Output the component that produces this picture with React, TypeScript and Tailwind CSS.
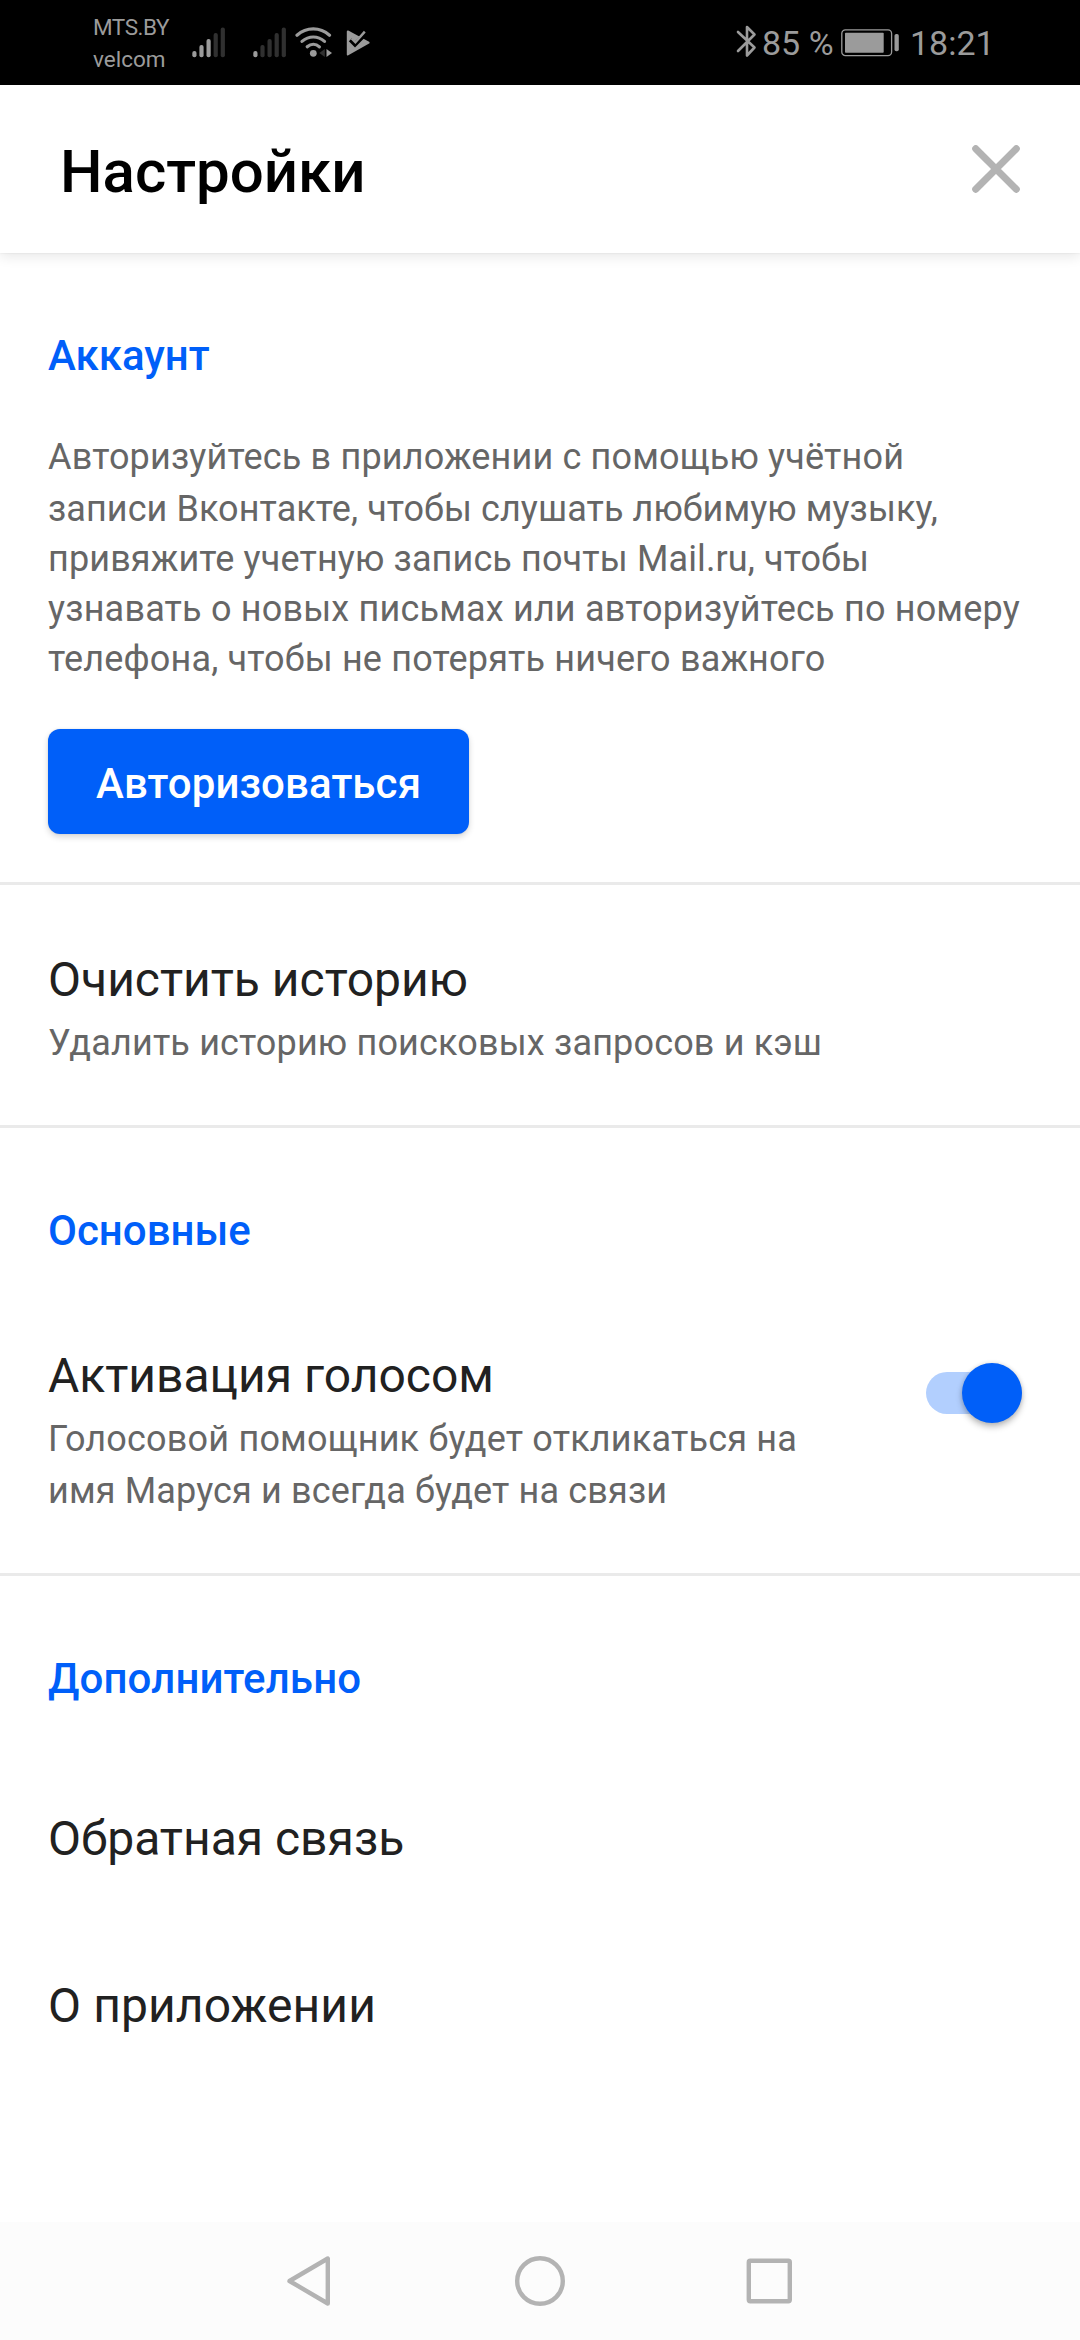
import type { ReactNode } from "react";

function SignalBars({ level, className }: { level: number; className: string }) {
  const tops = [23.5, 17.5, 11.5, 5.5, 0];
  return (
    <svg className={className} width="34" height="31" viewBox="0 0 34 31" fill="none">
      {tops.map((top, i) => (
        <rect
          key={top}
          x={0.3 + i * 7.1}
          y={top + 0.5}
          width="4.2"
          height={30 - top - 0.3}
          rx="2"
          fill={i < level ? "#9b9b9b" : "#303030"}
        />
      ))}
    </svg>
  );
}

function WifiIcon() {
  return (
    <svg className="ml-2" width="38" height="31" viewBox="0 0 38 31" fill="none">
      <g stroke="#9b9b9b" strokeWidth="3.2" strokeLinecap="round">
        <path d="M2 8.2C11.5-0.2 25-0.2 34.5 8.2" />
        <path d="M7 14.4C13.8 8.5 22.8 8.5 29.5 14.4" />
        <path d="M12.2 19.8C16 16.4 20.8 16.4 24.4 19.8" />
      </g>
      <circle cx="18.3" cy="26.3" r="3.4" fill="#9b9b9b" />
      <path d="M29.8 22V30L24.3 26Z" fill="#303030" />
      <path d="M31.5 22L37 26L31.5 30Z" fill="#9b9b9b" />
    </svg>
  );
}

function PlayCheckIcon() {
  return (
    <svg className="ml-[13px]" width="26" height="27" viewBox="0 0 26 27" fill="none">
      <path d="M1.8 2.4L22.6 13.7L1.8 25.5Z" fill="#9b9b9b" stroke="#9b9b9b" strokeWidth="2" strokeLinejoin="round" />
      <path d="M4.4 10.8L9 15.4L22 2.2" stroke="#000" strokeWidth="4.4" />
      <path d="M5.6 9.5L9.4 13.3L18.8 2.6" stroke="#9b9b9b" strokeWidth="2.4" />
    </svg>
  );
}

function BluetoothIcon() {
  return (
    <svg width="22" height="33" viewBox="0 0 22 33" fill="none" stroke="#9b9b9b" strokeWidth="2.6" strokeLinejoin="round" strokeLinecap="round">
      <path d="M2 7L18.5 22.5L11 30.5V2L18.5 9.5L2 26" />
    </svg>
  );
}

function BatteryIcon() {
  return (
    <svg width="59" height="28" viewBox="0 0 59 28" fill="none">
      <rect x="0.8" y="0.8" width="49.8" height="25.8" rx="3.6" stroke="#9b9b9b" strokeWidth="1.3" />
      <rect x="4" y="3.7" width="38.7" height="20" rx="0.8" fill="#9b9b9b" />
      <rect x="53.5" y="5" width="4.3" height="17.2" rx="1.8" fill="#9b9b9b" />
    </svg>
  );
}

function StatusBar() {
  return (
    <div className="flex h-[85px] justify-between bg-black pr-[90px] pl-[93px] text-[#9b9b9b]">
      <div className="flex">
        <div className="w-[99px] pt-[11px] text-[22.5px] leading-8">
          <div className="tracking-[-0.45px]">MTS.BY</div>
          <div>velcom</div>
        </div>
        <div className="flex h-[58px] items-end">
          <SignalBars level={3} className="" />
          <SignalBars level={1} className="ml-[27px]" />
          <WifiIcon />
          <div className="pb-[2px]">
            <PlayCheckIcon />
          </div>
        </div>
      </div>
      <div className="flex pt-[23px] text-[34px] leading-10">
        <div className="mt-[2px] mr-[6px] w-5">
          <BluetoothIcon />
        </div>
        <span className="w-[79px]">85 %</span>
        <div className="mt-[6px] w-[69px]">
          <BatteryIcon />
        </div>
        <span className="w-[80px] whitespace-nowrap">18:21</span>
      </div>
    </div>
  );
}

function Header() {
  return (
    <header className="relative flex h-[168px] justify-between bg-white pt-[51px] pr-[60px] pl-[60px] shadow-[0_4px_12px_rgba(0,0,0,0.09),0_0_2px_rgba(0,0,0,0.09)] [clip-path:inset(0_0_-30px_0)]">
      <h1 className="text-[60px] leading-[71px] font-medium text-black">Настройки</h1>
      <button className="mt-[9px] h-12 w-12" aria-label="Закрыть">
        <svg width="48" height="48" viewBox="0 0 48 48" fill="none" stroke="#b3b3b3" strokeWidth="7" strokeLinecap="round">
          <path d="M3.7 3.7L44.3 44.3M44.3 3.7L3.7 44.3" />
        </svg>
      </button>
    </header>
  );
}

function Heading({ children }: { children: ReactNode }) {
  return <h2 className="text-[42px] leading-[49px] font-medium text-[#005ff9]">{children}</h2>;
}

function RowTitle({ children }: { children: ReactNode }) {
  return <div className="text-5xl leading-[57px] text-[#212121]">{children}</div>;
}

function Toggle() {
  return (
    <div className="relative mt-[25px] h-[42px] w-24 rounded-full bg-[#b2cffe]">
      <div className="absolute -top-[9px] right-0 size-[60px] rounded-full bg-[#005ff9] shadow-[0_4px_6px_rgba(0,0,0,0.25),0_0_4px_rgba(0,0,0,0.12)]" />
    </div>
  );
}

function NavBar() {
  return (
    <nav className="flex h-[118px] justify-between bg-[#fcfcfc] px-[284px] pt-8">
      <svg width="50" height="54" viewBox="0 0 50 54" fill="none" stroke="#b3b3b3" strokeWidth="4.4" strokeLinejoin="round">
        <path d="M43.8 4.5V49.5L5.5 27Z" />
      </svg>
      <svg width="54" height="54" viewBox="0 0 54 54" fill="none" stroke="#b3b3b3" strokeWidth="4.4">
        <circle cx="27" cy="27" r="22.8" />
      </svg>
      <svg width="50" height="54" viewBox="0 0 50 54" fill="none" stroke="#b3b3b3" strokeWidth="4.4">
        <rect x="2.8" y="6.8" width="41" height="40.5" rx="1.5" />
      </svg>
    </nav>
  );
}

export default function App() {
  return (
    <div className="flex h-[2340px] w-[1080px] flex-col bg-white font-[Roboto,sans-serif]">
      <StatusBar />
      <Header />
      <main className="flex-1">
        <section className="border-b-3 border-[#eaeaea] px-12 pt-[78px] pb-12">
          <Heading>Аккаунт</Heading>
          <p className="mt-[52px] text-4xl leading-[50px] whitespace-nowrap text-[#666]">
            <span className="mb-[2px] block tracking-[0.16px]">Авторизуйтесь в приложении с помощью учётной</span>
            <span className="block tracking-[0.07px]">записи Вконтакте, чтобы слушать любимую музыку,</span>
            <span className="block tracking-[0.12px]">привяжите учетную запись почты Mail.ru, чтобы</span>
            <span className="block tracking-[0.18px]">узнавать о новых письмах или авторизуйтесь по номеру</span>
            <span className="block tracking-[0.16px]">телефона, чтобы не потерять ничего важного</span>
          </p>
          <button className="mt-[45px] block h-[105px] w-[421px] rounded-xl bg-[#005ff9] pt-[3px] text-[42px] leading-[49px] font-medium tracking-[0.1px] text-white shadow-[0_3px_6px_rgba(0,0,0,0.16),0_0_2px_rgba(0,0,0,0.1)]">
            Авторизоваться
          </button>
        </section>

        <section className="border-b-3 border-[#eaeaea] px-12 pt-[66px] pb-[57px]">
          <RowTitle>Очистить историю</RowTitle>
          <p className="mt-[10px] text-4xl leading-[50px] tracking-[0.16px] text-[#666]">Удалить историю поисковых запросов и кэш</p>
        </section>

        <section className="border-b-3 border-[#eaeaea] px-12 pt-[78px] pb-[57px]">
          <Heading>Основные</Heading>
          <div className="mt-[92px] flex justify-between pr-[10px]">
            <div>
              <RowTitle>Активация голосом</RowTitle>
              <p className="mt-[10px] text-4xl leading-[50px] text-[#666]">
                <span className="mb-[2px] block tracking-[0.19px]">Голосовой помощник будет откликаться на</span>
                <span className="block tracking-[0.14px]">имя Маруся и всегда будет на связи</span>
              </p>
            </div>
            <Toggle />
          </div>
        </section>

        <section className="px-12 pt-[78px]">
          <div className="tracking-[0.12px]">
            <Heading>Дополнительно</Heading>
          </div>
          <div className="mt-[107px] flex flex-col gap-[110px]">
            <RowTitle>Обратная связь</RowTitle>
            <div className="tracking-[0.1px]">
              <RowTitle>О приложении</RowTitle>
            </div>
          </div>
        </section>
      </main>
      <NavBar />
    </div>
  );
}
